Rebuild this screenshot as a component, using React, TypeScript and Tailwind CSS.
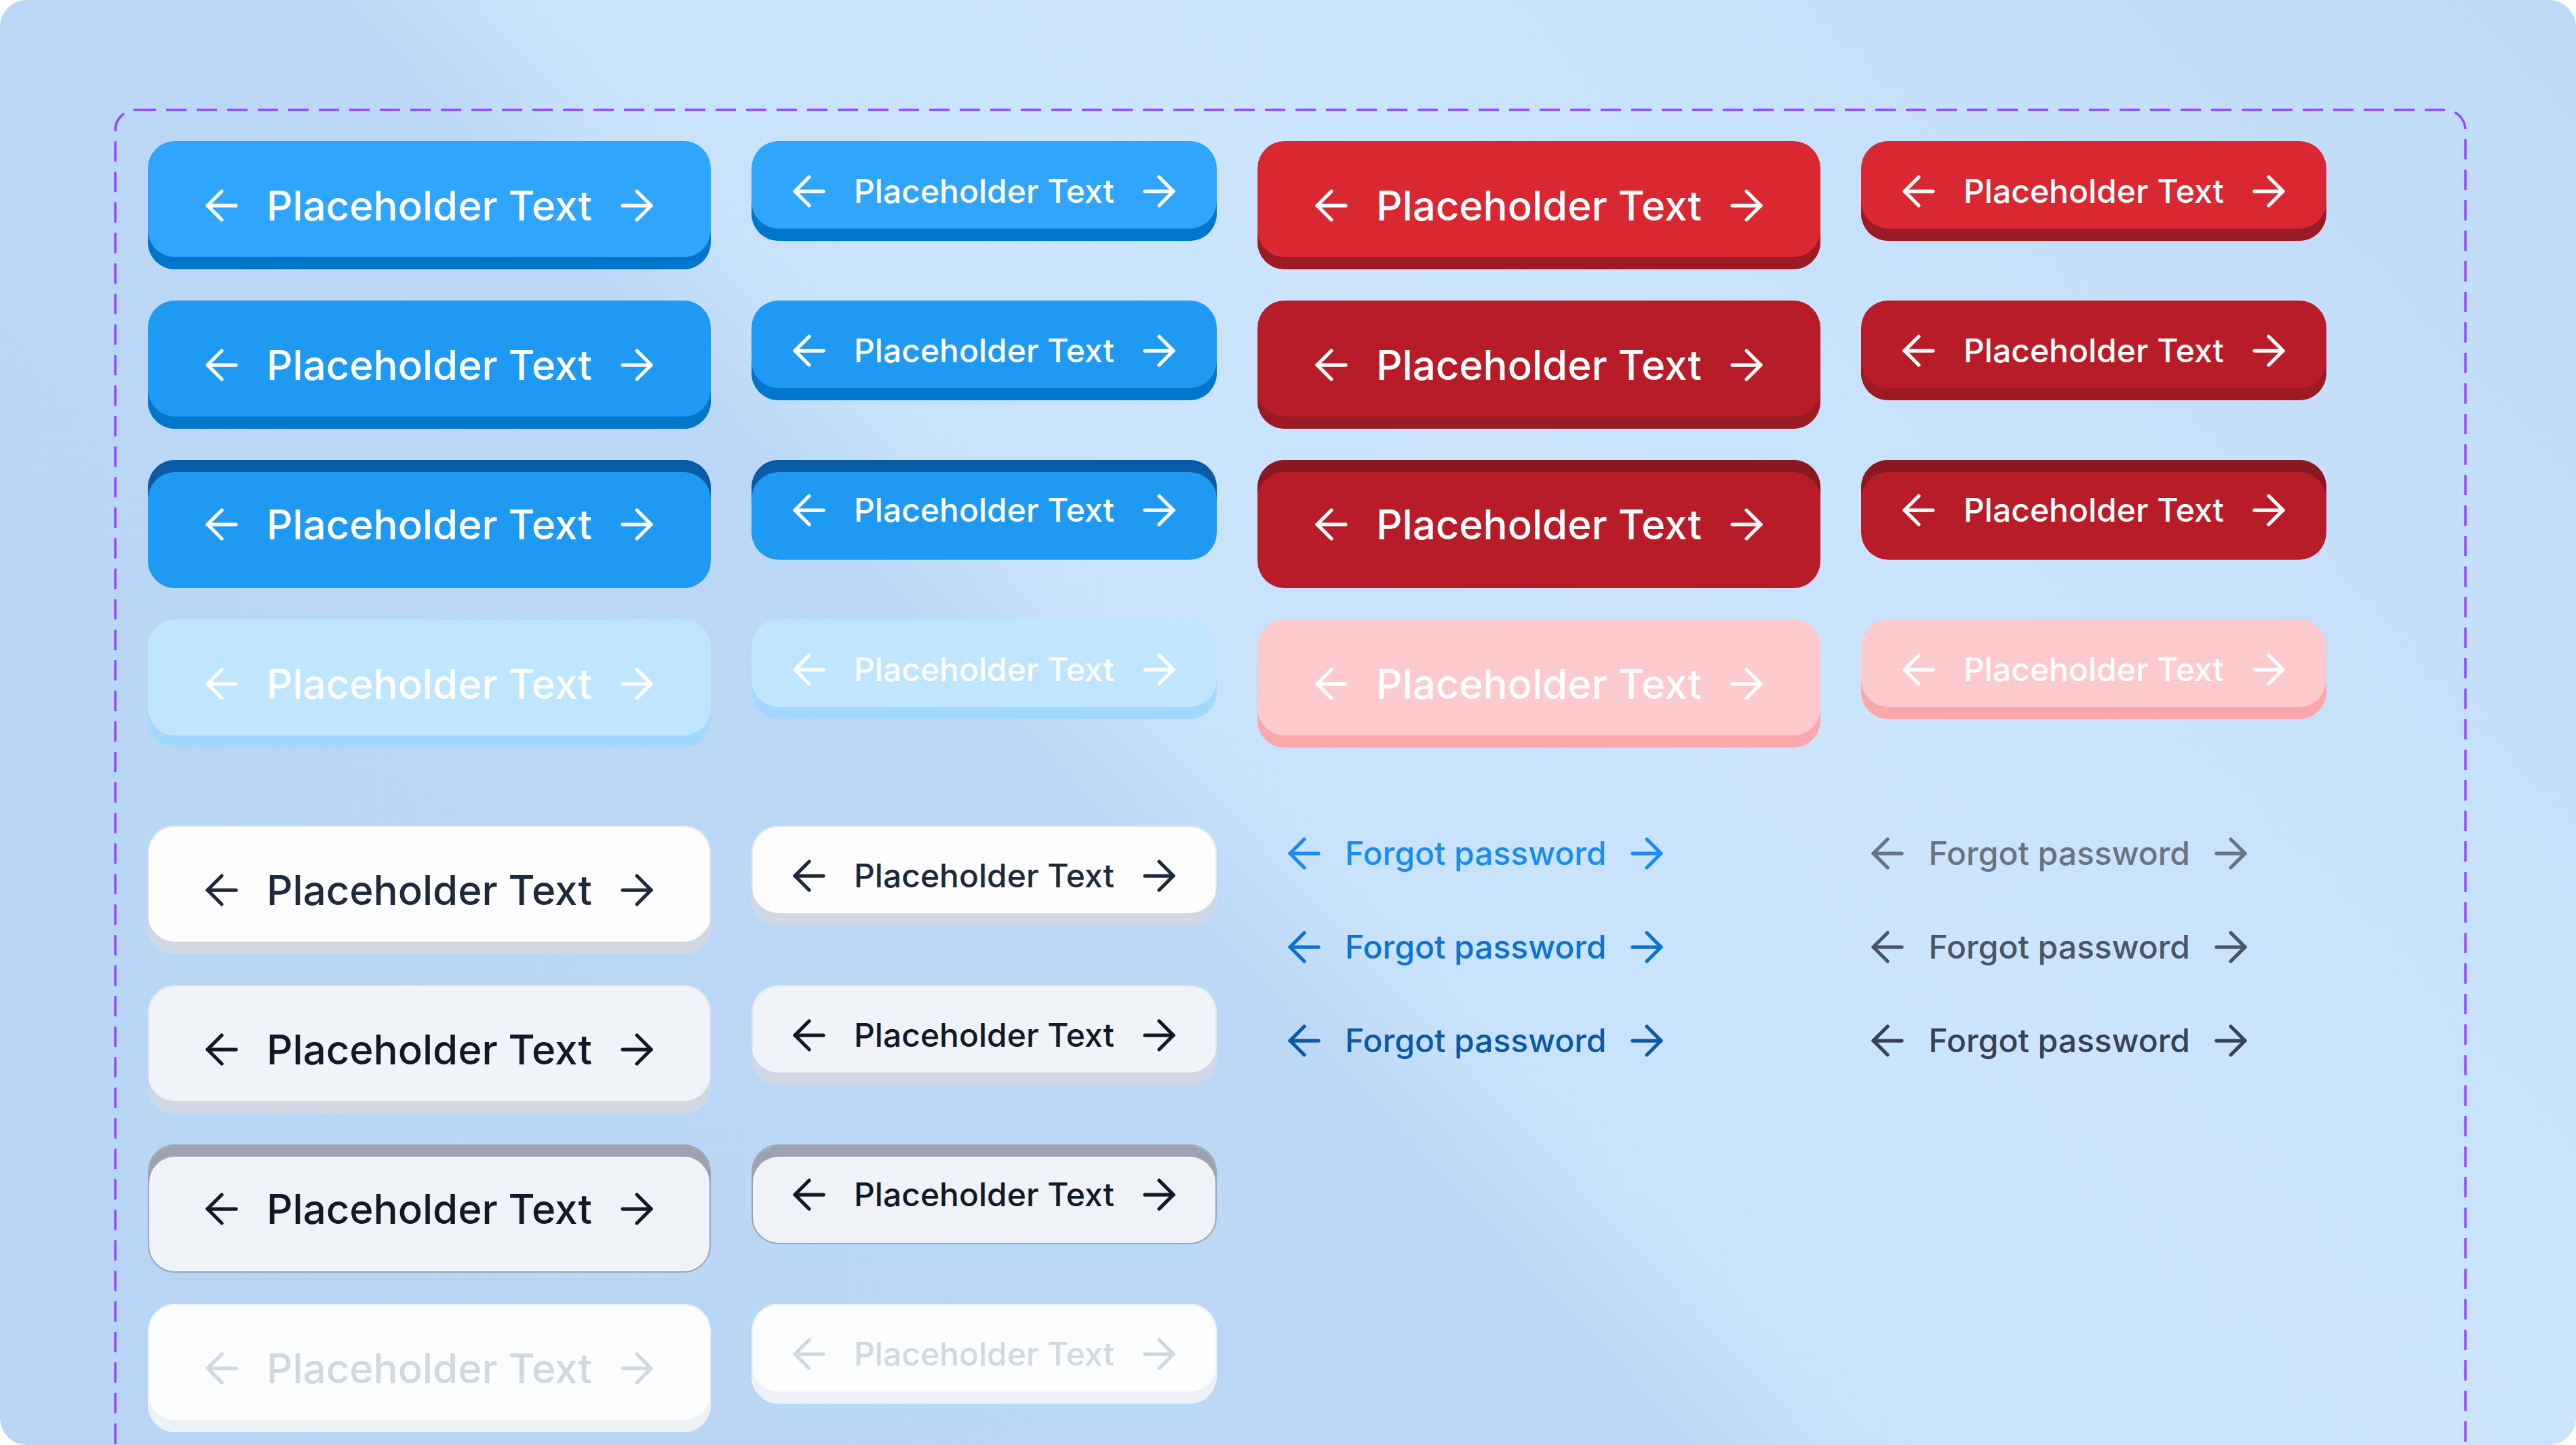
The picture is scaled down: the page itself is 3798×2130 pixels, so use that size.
import { ArrowLeft, ArrowRight } from 'lucide-react';

type Tone = 'blue' | 'red' | 'white';
type State = 'default' | 'hover' | 'pressed' | 'disabled';
type Size = 'lg' | 'sm';

// face colour, 3d edge (inset shadow) and text colour per tone and state
const styles: Record<Tone, Record<State, string>> = {
  blue: {
    default: 'bg-[#30a5fe] shadow-[inset_0_-18px_0_0_#0075cc] text-white',
    hover: 'bg-[#1e9af2] shadow-[inset_0_-18px_0_0_#0075cc] text-white',
    pressed: 'bg-[#1e9af2] shadow-[inset_0_18px_0_0_#0b5aa6] text-white',
    disabled: 'bg-[#bfe6fe] shadow-[inset_0_-18px_0_0_#a3d8fd] text-white',
  },
  red: {
    default: 'bg-[#da2833] shadow-[inset_0_-18px_0_0_#9a1b24] text-white',
    hover: 'bg-[#b91c29] shadow-[inset_0_-18px_0_0_#9a1b24] text-white',
    pressed: 'bg-[#b91c29] shadow-[inset_0_18px_0_0_#8a1820] text-white',
    disabled: 'bg-[#fdcacd] shadow-[inset_0_-18px_0_0_#faa7ab] text-white',
  },
  white: {
    default: 'bg-[#fdfdfe] shadow-[inset_0_-18px_0_0_#cfd8e3,inset_0_0_0_2px_#e4e9f0] text-[#1e293b]',
    hover: 'bg-[#f0f3f8] shadow-[inset_0_-18px_0_0_#cfd8e3,inset_0_0_0_2px_#e0e6ed] text-[#111827]',
    pressed: 'bg-[#eff2f7] border-2 border-[#9ca3af] shadow-[inset_0_16px_0_0_#9ca3af] text-[#111827]',
    disabled: 'bg-[#fcfdfe] shadow-[inset_0_-18px_0_0_#eef2f7,inset_0_0_0_2px_#eef2f7] text-[#d1d8e2]',
  },
};

function Button({ tone, state, size }: { tone: Tone; state: State; size: Size }) {
  const lg = size === 'lg';
  return (
    <div
      className={`flex items-center justify-center gap-[30px] rounded-[40px] ${styles[tone][state]} ${
        lg ? 'h-[189px] w-[830px]' : 'h-[147px] w-[686px]'
      }`}
    >
      <ArrowLeft size={72} strokeWidth={1.75} />
      <span className={`font-medium leading-none ${lg ? 'text-[60px]' : 'text-[48px]'}`}>Placeholder Text</span>
      <ArrowRight size={72} strokeWidth={1.75} />
    </div>
  );
}

function TextLink({ color }: { color: string }) {
  return (
    <div className={`flex h-[72px] items-center gap-[24px] ${color}`}>
      <ArrowLeft size={72} strokeWidth={1.75} />
      <span className="text-[48px] font-medium leading-none">Forgot password</span>
      <ArrowRight size={72} strokeWidth={1.75} />
    </div>
  );
}

const states: State[] = ['default', 'hover', 'pressed', 'disabled'];

export default function App() {
  return (
    <div className="min-h-screen bg-white">
      <div
        className="relative h-[2130px] overflow-hidden rounded-[40px] bg-[linear-gradient(47deg,#b9d5f5_0%,#bcd8f6_43%,#c8e2fc_47%,#cce5fd_62%,#c5dffa_85%,#bfdaf7_100%)]"
        style={{ fontFamily: 'Inter, "Noto Sans", sans-serif' }}
      >
        <div className="relative ml-[170px] mt-[162px] h-[2300px] w-[3465px] pl-[48px] pt-[46px]">
          {/* dashed component-set frame */}
          <svg className="pointer-events-none absolute inset-0 h-full w-full overflow-visible">
            <rect
              x="0"
              y="0"
              width="100%"
              height="100%"
              rx="30"
              fill="none"
              stroke="#9747ff"
              strokeWidth="3.5"
              strokeDasharray="30 15"
            />
          </svg>

          <div className="flex flex-col gap-[115px]">
            {/* primary + danger */}
            <div className="grid grid-cols-[830px_686px_830px_686px] items-start gap-x-[60px] gap-y-[46px]">
              {states.map(st => (
                <div key={st} className="contents">
                  <Button tone="blue" state={st} size="lg" />
                  <Button tone="blue" state={st} size="sm" />
                  <Button tone="red" state={st} size="lg" />
                  <Button tone="red" state={st} size="sm" />
                </div>
              ))}
            </div>

            {/* secondary + links */}
            <div className="flex items-start">
              <div className="grid grid-cols-[830px_686px] items-start gap-x-[60px] gap-y-[46px]">
                {states.map(st => (
                  <div key={st} className="contents">
                    <Button tone="white" state={st} size="lg" />
                    <Button tone="white" state={st} size="sm" />
                  </div>
                ))}
              </div>

              <div className="ml-[93px] mt-[5px] flex gap-[283px]">
                <div className="flex flex-col gap-[66px]">
                  <TextLink color="text-[#1a8cf0]" />
                  <TextLink color="text-[#0b73d0]" />
                  <TextLink color="text-[#0a5aa3]" />
                </div>
                <div className="flex flex-col gap-[66px]">
                  <TextLink color="text-[#6b7280]" />
                  <TextLink color="text-[#4b5563]" />
                  <TextLink color="text-[#374151]" />
                </div>
              </div>
            </div>
          </div>
        </div>
      </div>
    </div>
  );
}
